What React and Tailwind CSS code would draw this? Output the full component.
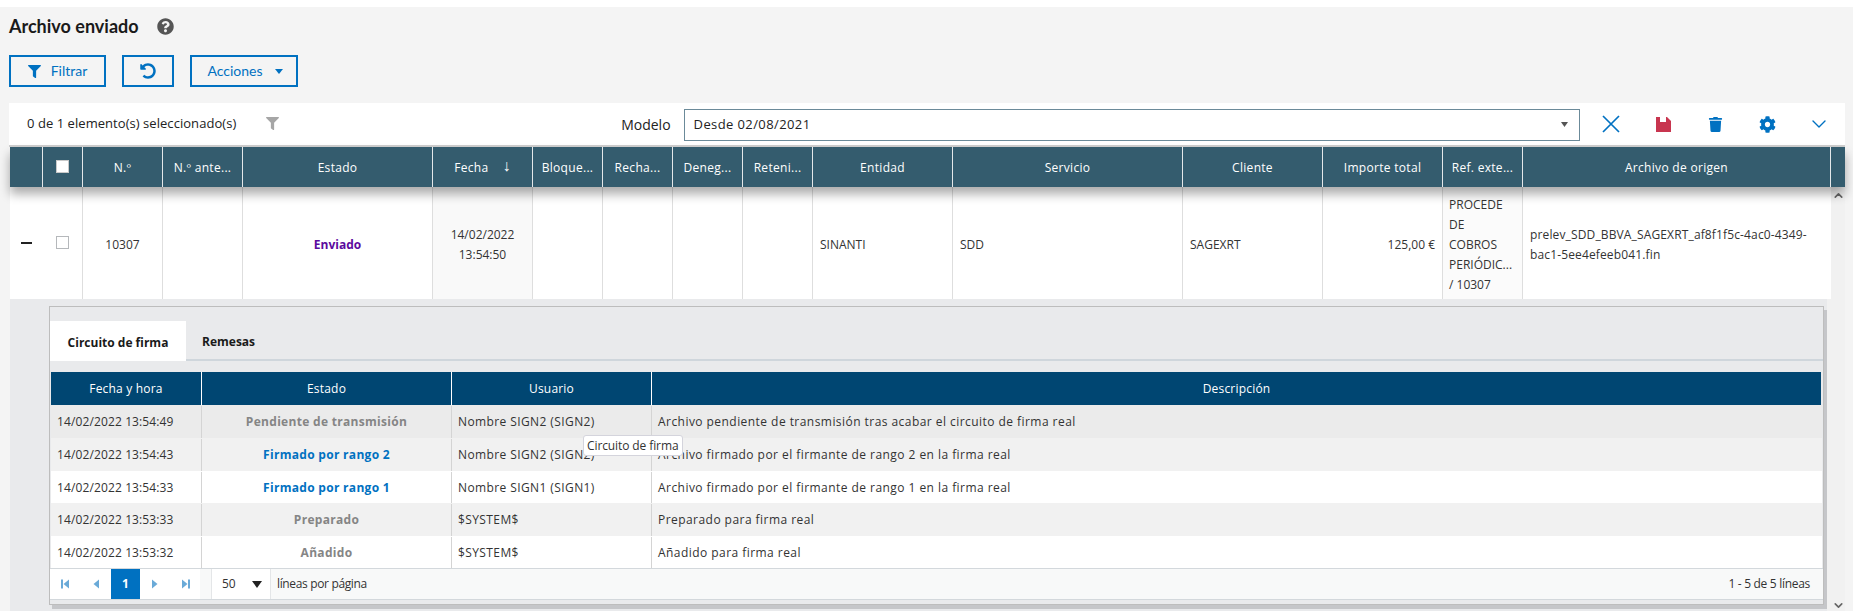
import React from 'react';
import { ChevronDown, ChevronUp } from 'lucide-react';
import { FaCog, FaFilter, FaQuestionCircle, FaTrash, FaUndoAlt } from 'react-icons/fa';

const mainColumns = [
  { label: '', width: 'w-[33px]' },
  { label: '', width: 'w-[40px]', check: true },
  { label: 'N.º', width: 'w-[80px]' },
  { label: 'N.º ante...', width: 'w-[80px]' },
  { label: 'Estado', width: 'w-[190px]' },
  { label: 'Fecha', width: 'w-[100px]', sort: true },
  { label: 'Bloque...', width: 'w-[70px]' },
  { label: 'Recha...', width: 'w-[70px]' },
  { label: 'Deneg...', width: 'w-[70px]' },
  { label: 'Reteni...', width: 'w-[70px]' },
  { label: 'Entidad', width: 'w-[140px]' },
  { label: 'Servicio', width: 'w-[230px]' },
  { label: 'Cliente', width: 'w-[140px]' },
  { label: 'Importe total', width: 'w-[120px]' },
  { label: 'Ref. exte...', width: 'w-[80px]' },
  { label: 'Archivo de origen', width: 'w-[308px]' },
];

const signRows = [
  { date: '14/02/2022 13:54:49', state: 'Pendiente de transmisión', color: 'text-[#858585]', user: 'Nombre SIGN2 (SIGN2)', desc: 'Archivo pendiente de transmisión tras acabar el circuito de firma real', bg: 'bg-[#ebebeb]', h: 'h-[33px]' },
  { date: '14/02/2022 13:54:43', state: 'Firmado por rango 2', color: 'text-[#0071c1]', user: 'Nombre SIGN2 (SIGN2)', desc: 'Archivo firmado por el firmante de rango 2 en la firma real', bg: 'bg-[#f1f1f1]', h: 'h-[33px]' },
  { date: '14/02/2022 13:54:33', state: 'Firmado por rango 1', color: 'text-[#0071c1]', user: 'Nombre SIGN1 (SIGN1)', desc: 'Archivo firmado por el firmante de rango 1 en la firma real', bg: 'bg-white', h: 'h-[32px]' },
  { date: '14/02/2022 13:53:33', state: 'Preparado', color: 'text-[#858585]', user: '$SYSTEM$', desc: 'Preparado para firma real', bg: 'bg-[#f1f1f1]', h: 'h-[33px]' },
  { date: '14/02/2022 13:53:32', state: 'Añadido', color: 'text-[#858585]', user: '$SYSTEM$', desc: 'Añadido para firma real', bg: 'bg-white', h: 'h-[32px]' },
];

function PagerIcon({ dir, edge }) {
  // triangle with an optional end bar, as in the grid pager
  const left = dir === 'left';
  return (
    <svg width="10" height="10" viewBox="0 0 10 10" className="fill-[#6aaad8]">
      {left ? <polygon points="8,0.5 8,9.5 2.5,5" /> : <polygon points="2,0.5 2,9.5 7.5,5" />}
      {edge && (left ? <rect x="0" y="0.5" width="2" height="9" /> : <rect x="8" y="0.5" width="2" height="9" />)}
    </svg>
  );
}

function MainHeader() {
  return (
    <div className="relative z-10 flex h-[40px] w-[1835px] bg-[#345c6e] text-white text-[12px] tracking-[0.3px] shadow-[0_7px_10px_rgba(0,0,0,0.33)]">
      {mainColumns.map((col, i) => (
        <div
          key={i}
          className={`${col.width} shrink-0 flex items-center justify-center gap-[14px] pt-[1px] border-r border-[#e4e8ea] whitespace-nowrap`}
        >
          {col.check && <span className="block w-[13px] h-[13px] -mt-[2px] bg-white border border-[#c9c9c9]" />}
          {col.label}
          {col.sort && <span className="text-[16px] leading-none -mt-[5px]">↓</span>}
        </div>
      ))}
      <div className="flex-1" />
    </div>
  );
}

function MainRow() {
  const cell = 'shrink-0 flex items-center border-r border-[#dedede]';
  return (
    <div className="flex h-[112px] bg-white text-[12px] leading-[20px] text-[#333]">
      <div className="w-[33px] shrink-0 flex items-center justify-center">
        <span className="block w-[11px] h-[2px] bg-[#222] -mt-[1px]" />
      </div>
      <div className={`w-[40px] ${cell} justify-center`}>
        <span className="block w-[13px] h-[13px] border border-[#b5b8bb] -mt-[1px]" />
      </div>
      <div className={`w-[80px] ${cell} justify-center pt-[3px]`}>10307</div>
      <div className={`w-[80px] ${cell}`} />
      <div className={`w-[190px] ${cell} justify-center pt-[3px] font-bold text-[#5c0a9e]`}>Enviado</div>
      <div className={`w-[100px] ${cell} justify-center pt-[3px] text-center bg-[#f9f9f9]`}>14/02/2022<br />13:54:50</div>
      <div className={`w-[70px] ${cell}`} />
      <div className={`w-[70px] ${cell}`} />
      <div className={`w-[70px] ${cell}`} />
      <div className={`w-[70px] ${cell}`} />
      <div className={`w-[140px] ${cell} pl-[7px] pt-[3px]`}>SINANTI</div>
      <div className={`w-[230px] ${cell} pl-[7px] pt-[3px]`}>SDD</div>
      <div className={`w-[140px] ${cell} pl-[7px] pt-[3px]`}>SAGEXRT</div>
      <div className={`w-[120px] ${cell} justify-end pr-[7px] pt-[3px]`}>125,00 €</div>
      <div className={`w-[80px] ${cell} pl-[6px] pt-[3px] bg-[#fbfbfb]`}>
        <div>PROCEDE<br />DE<br />COBROS<br />PERIÓDIC...<br />/ 10307</div>
      </div>
      <div className="w-[308px] shrink-0 flex items-center pl-[7px] pr-[10px] pt-[3px] tracking-[0.14px]">
        <div>prelev_SDD_BBVA_SAGEXRT_af8f1f5c-4ac0-4349-<br />bac1-5ee4efeeb041.fin</div>
      </div>
    </div>
  );
}

function SignTable() {
  return (
    <div className="mt-[11px] px-px">
      <div className="flex h-[33px] w-[1770px] bg-[#004672] text-white text-[12px] tracking-[0.2px]">
        <div className="w-[151px] border-r border-white flex items-center justify-center">Fecha y hora</div>
        <div className="w-[250px] border-r border-white flex items-center justify-center">Estado</div>
        <div className="w-[200px] border-r border-white flex items-center justify-center">Usuario</div>
        <div className="flex-1 flex items-center justify-center">Descripción</div>
      </div>
      {signRows.map(row => (
        <div key={row.date} className={`flex ${row.h} ${row.bg} pt-px text-[12px] text-[#333]`}>
          <div className="w-[151px] border-r border-[#d4d4d4] flex items-center pl-[6px] tracking-[0.12px]">{row.date}</div>
          <div className={`w-[250px] border-r border-[#d4d4d4] flex items-center justify-center font-bold tracking-[0.3px] ${row.color}`}>{row.state}</div>
          <div className="w-[200px] border-r border-[#d4d4d4] flex items-center pl-[6px] tracking-[0.4px]">{row.user}</div>
          <div className="flex-1 flex items-center pl-[6px] tracking-[0.45px]">{row.desc}</div>
        </div>
      ))}
    </div>
  );
}

function Pager() {
  return (
    <div className="flex h-[32px] w-[1773px] items-stretch border-y border-[#d3d8dc] bg-[#f8f9f9] text-[12px] text-[#333]">
      <div className="flex bg-white w-[150px] pl-[1px]">
        <div className="w-[30px] flex items-center justify-center"><PagerIcon dir="left" edge /></div>
        <div className="w-[30px] flex items-center justify-center"><PagerIcon dir="left" /></div>
        <div className="w-[30px] flex items-center justify-center bg-[#0071c1] text-white font-bold">1</div>
        <div className="w-[30px] flex items-center justify-center"><PagerIcon dir="right" /></div>
        <div className="w-[30px] flex items-center justify-center"><PagerIcon dir="right" edge /></div>
      </div>
      <div className="ml-[11px] w-[60px] flex items-center justify-between bg-white border-x border-[#e4e6e8] pl-[10px] pr-[8px]">
        50
        <svg width="10" height="7" viewBox="0 0 10 7" className="fill-[#222]"><polygon points="0,0 10,0 5,7" /></svg>
      </div>
      <div className="flex items-center pl-[6px] tracking-[-0.35px]">líneas por página</div>
      <div className="flex-1 flex items-center justify-end pr-[13px] tracking-[-0.3px]">1 - 5 de 5 líneas</div>
    </div>
  );
}

export default function App() {
  return (
    <div className="relative h-[611px] w-[1853px] overflow-hidden bg-[#f4f4f4] font-['Open_Sans',sans-serif]">
      <div className="h-[7px] bg-white" />

      <div className="flex h-[48px] items-center pl-[9px] pb-[9px] gap-[18px]">
        <h1 className="font-['Lato',sans-serif] text-[18px] font-bold text-[#1a1a1a]">Archivo enviado</h1>
        <FaQuestionCircle size={17} className="text-[#555]" />
      </div>

      <div className="flex gap-[16px] pl-[9px] font-['Lato',sans-serif] text-[14px] text-[#0071c1]">
        <button className="h-[32px] w-[97px] pb-[2px] border-2 border-[#0071c1] flex items-center justify-center gap-[10px]">
          <FaFilter size={13} className="mt-[2px]" /> Filtrar
        </button>
        <button className="h-[32px] w-[52px] border-2 border-[#0071c1] flex items-center justify-center">
          <FaUndoAlt size={16} />
        </button>
        <button className="h-[32px] w-[108px] pb-[2px] pl-[2px] border-2 border-[#0071c1] flex items-center justify-center gap-[12px]">
          Acciones
          <svg width="8" height="5" viewBox="0 0 8 5" className="fill-[#0071c1] mt-[3px]"><polygon points="0,0 8,0 4,5" /></svg>
        </button>
      </div>

      <div className="mt-[16px] ml-[9px] w-[1836px] h-[44px] bg-white border-b-2 border-[#cfcfcf] flex items-center text-[13px] text-[#222]">
        <div className="w-[280px] pl-[18px] flex items-center gap-[30px] whitespace-nowrap tracking-[0.05px]">
          0 de 1 elemento(s) seleccionado(s)
          <FaFilter size={13} className="text-[#a6a6a6] -mt-[1px]" />
        </div>
        <div className="w-[395px] flex justify-end pr-[13px] text-[14px] font-medium">Modelo</div>
        <div className="w-[897px] h-[32px] mt-[1px] border border-[#6b8a99] flex items-center justify-between pl-[9px] pr-[11px] tracking-[0.4px]">
          Desde 02/08/2021
          <svg width="7" height="5" viewBox="0 0 7 5" className="fill-[#555]"><polygon points="0,0 7,0 3.5,5" /></svg>
        </div>
        <div className="flex-1 flex items-center pl-[5px] text-[#0071c1]">
          <div className="w-[52px] flex justify-center">
            <svg width="18" height="18" viewBox="0 0 18 18" className="stroke-[#0071c1]" strokeWidth="1.7" fill="none">
              <path d="M1 1 L17 17 M17 1 L1 17" />
            </svg>
          </div>
          <div className="w-[52px] flex justify-center">
            <svg width="15" height="15" viewBox="0 0 15 15" className="fill-[#c8354f]">
              <path fillRule="evenodd" d="M0 0 H11 L15 4 V15 H0 Z M4 0 V5 H10 V0 Z" />
            </svg>
          </div>
          <div className="w-[52px] flex justify-center"><FaTrash size={15} /></div>
          <div className="w-[52px] flex justify-center"><FaCog size={17} /></div>
          <div className="w-[52px] flex justify-center"><ChevronDown size={24} strokeWidth={1.4} /></div>
        </div>
      </div>

      <div className="ml-[10px] w-[1835px]">
        <MainHeader />
        <div className="flex">
          <div className="w-[1821px] shrink-0 bg-[#f1f1f1]">
            <MainRow />
            <div className="w-[1817px] h-[312px] bg-[#e9eaec] pl-[39px] pt-[7px]">
              <div className="w-[1775px] h-[299px] bg-[#e9eaec] border border-[#bdbdbd] shadow-[3px_4px_0_#c5c6c9]">
                <div className="mt-[14px] flex h-[40px] border-b-2 border-[#cfd6dc] text-[12px] font-bold text-[#1a1a1a]">
                  <div className="w-[136px] bg-white flex items-center justify-center pt-[3px] -mb-[2px]">Circuito de firma</div>
                  <div className="flex items-center pl-[16px] pt-[3px]">Remesas</div>
                </div>
                <SignTable />
                <Pager />
              </div>
            </div>
          </div>
          <div className="relative flex-1 bg-[#f1f1f1]">
            <ChevronUp size={13} strokeWidth={3} className="absolute left-[1px] top-[2px] text-[#666]" />
            <ChevronDown size={13} strokeWidth={3} className="absolute left-[1px] top-[412px] text-[#666]" />
          </div>
        </div>
      </div>

      <div className="absolute left-[583px] top-[435px] h-[21px] px-[3px] flex items-center bg-white border border-[#d4d4dc] rounded-[3px] text-[12px] tracking-[-0.1px] text-[#333] whitespace-nowrap">
        Circuito de firma
      </div>
    </div>
  );
}
